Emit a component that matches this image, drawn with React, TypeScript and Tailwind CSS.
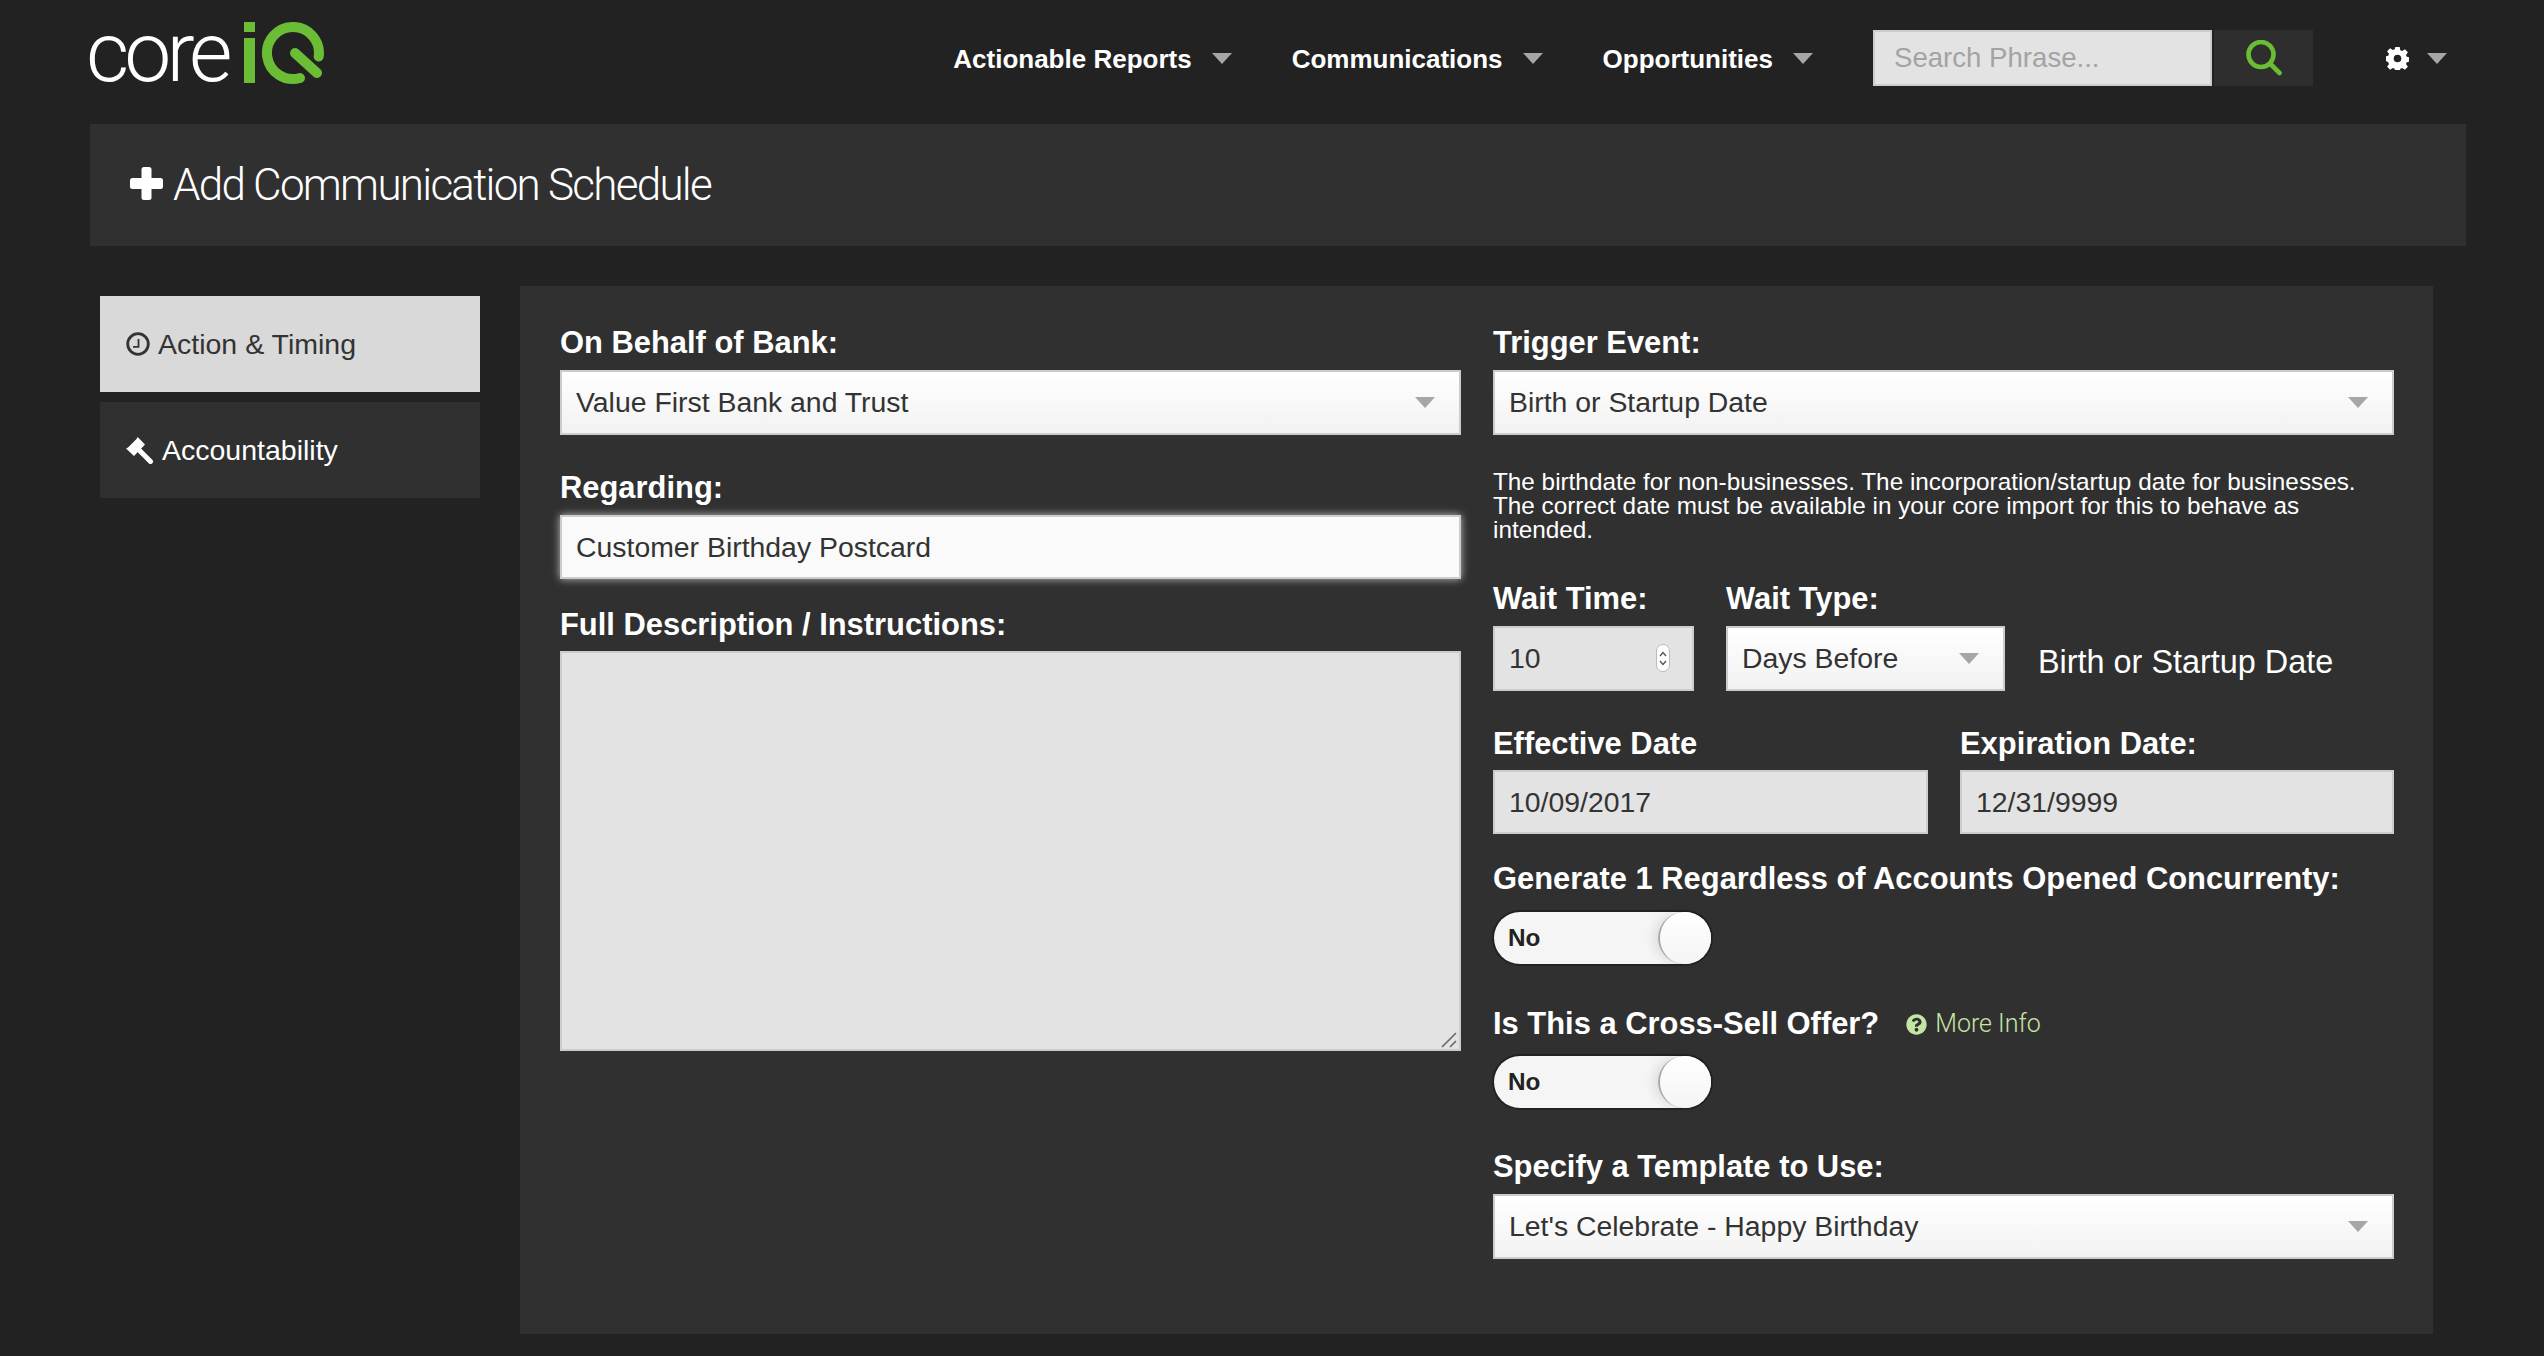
import React from 'react';
import { FaQuestionCircle } from 'react-icons/fa';

const Caret = ({ className = '' }: { className?: string }) => (
  <svg width="20" height="11" viewBox="0 0 20 11" className={className}>
    <polygon points="0,0 20,0 10,11" fill="#a6a6a6" />
  </svg>
);

const Label = ({ children, className = '' }: { children: React.ReactNode; className?: string }) => (
  <div className={`text-[30.9px] leading-[32px] font-bold text-white translate-y-[1px] ${className}`}>{children}</div>
);

const SelectBox = ({ value, className = '' }: { value: string; className?: string }) => (
  <div className={`h-[65px] flex items-center justify-between pl-[14px] pr-[24px] border-2 border-[#cccccc] bg-gradient-to-b from-white to-[#f2f2f2] text-[28.4px] text-[#333333] ${className}`}>
    <span>{value}</span>
    <Caret />
  </div>
);

const GrayInput = ({ value, className = '' }: { value: string; className?: string }) => (
  <div className={`h-[64px] flex items-center pl-[14px] border-2 border-[#cccccc] bg-[#e3e3e3] text-[28.4px] text-[#333333] ${className}`}>{value}</div>
);

const Toggle = () => (
  <div className="relative ml-[1px] w-[217px] h-[52px] rounded-full bg-[#f5f5f5] shadow-[0_0_0_2px_#222222] flex items-center pl-[14px] text-[24.3px] font-bold text-[#222222]">
    No
    <div className="absolute right-0 top-0 w-[53px] h-[52px] rounded-full border-l-2 border-[#aaaaaa] bg-gradient-to-b from-white to-[#f4f4f4] shadow-[-6px_0_10px_rgba(0,0,0,0.08)]" />
  </div>
);

const Logo = () => (
  <div className="flex items-start">
    <span className="block w-[158px] mt-[11px] text-[84px] leading-[84px] tracking-[-5px] font-light text-white font-['Roboto','Liberation_Sans',sans-serif]">core</span>
    <svg width="82" height="64" viewBox="0 0 82 64" className="mt-[22px]">
      <rect x="0" y="0" width="11" height="10" fill="#6abd34" />
      <rect x="0" y="16" width="11" height="45" fill="#6abd34" />
      <path d="M74.7 34.6 A26 26 0 1 0 56 56" fill="none" stroke="#6abd34" strokeWidth="10" strokeLinecap="round" />
      <path d="M51 31 L73 51" fill="none" stroke="#6abd34" strokeWidth="10" strokeLinecap="round" />
    </svg>
  </div>
);

const SearchIcon = () => (
  <svg width="36" height="36" viewBox="0 0 36 36" fill="none" stroke="#6abd34" strokeLinecap="round">
    <circle cx="15" cy="14.5" r="12.5" strokeWidth="4.6" />
    <path d="M24.5 24 L33.5 33" strokeWidth="4.6" />
  </svg>
);

const GearIcon = ({ className = '' }: { className?: string }) => (
  <svg width="23" height="23" viewBox="0 0 23 23" className={className} fill="#ffffff">
    <path
      fillRule="evenodd"
      d="M9.3 0h4.4l.6 3.2 1.9.8 2.7-1.8 3 3-1.9 2.7.8 1.9 3.1.6v4.2l-3.1.6-.8 1.9 1.9 2.7-3 3-2.7-1.9-1.9.8-.6 3.2H9.3l-.6-3.2-1.9-.8-2.7 1.9-3-3 1.9-2.7-.8-1.9L-.9 13.6V9.4l3.1-.6.8-1.9L1.1 4.2l3-3 2.7 1.8 1.9-.8zM11.5 7.7a3.8 3.8 0 1 0 0 7.6 3.8 3.8 0 0 0 0-7.6z"
    />
  </svg>
);

const PlusIcon = () => (
  <svg width="33" height="33" viewBox="0 0 33 33" fill="#ffffff" className="-mt-[3px]">
    <rect x="11.5" y="0" width="10" height="33" rx="2.5" />
    <rect x="0" y="11" width="33" height="11" rx="2.5" />
  </svg>
);

const ClockIcon = () => (
  <svg width="24" height="24" viewBox="0 0 24 24" fill="none" stroke="#333333">
    <circle cx="12" cy="12" r="10.3" strokeWidth="2.8" />
    <path d="M12.5 7 V14.8 H7" strokeWidth="1.8" />
  </svg>
);

const GavelIcon = () => (
  <svg width="28" height="27" viewBox="0 0 28 27" fill="#ffffff">
    <polygon points="11.7,0 19,7.5 8,19 0,11.5 2,10.5 10.5,2" />
    <path d="M13 13 L24.5 24.5" stroke="#ffffff" strokeWidth="5" strokeLinecap="round" />
  </svg>
);

const NavItem = ({ text }: { text: string }) => (
  <div className="flex items-center gap-[20px] mr-[60px]">
    <span className="text-[26px] leading-[32px] font-bold text-white translate-y-[1px]">{text}</span>
    <Caret />
  </div>
);

export default function App() {
  return (
    <div className="min-h-screen bg-[#222222] font-['Liberation_Sans',Arial,sans-serif]">
      <header className="h-[124px] flex justify-between pl-[86px] pr-[97px]">
        <Logo />
        <div className="flex items-center h-[56px] mt-[30px]">
          <NavItem text="Actionable Reports" />
          <NavItem text="Communications" />
          <NavItem text="Opportunities" />
          <div className="w-[339px] h-[56px] flex items-center pl-[19px] border-2 border-[#cccccc] bg-[#e3e3e3] text-[27.6px] text-[#a3a3a3]">Search Phrase...</div>
          <div className="ml-[2px] w-[99px] h-[56px] flex items-center justify-center bg-[#2e2e2e]">
            <SearchIcon />
          </div>
          <GearIcon className="ml-[73px]" />
          <Caret className="ml-[18px]" />
        </div>
      </header>

      <div className="ml-[90px] mr-[78px] h-[122px] bg-[#303030] flex items-center pl-[40px]">
        <PlusIcon />
        <h1 className="ml-[10px] text-[44px] tracking-[-1.75px] font-light text-white font-['Roboto','Liberation_Sans',sans-serif]">Add Communication Schedule</h1>
      </div>

      <div className="flex pl-[100px] pr-[111px] pt-[40px] pb-[22px]">
        <aside className="w-[380px] shrink-0 mt-[10px] mr-[40px]">
          <div className="h-[96px] bg-[#d9d9d9] flex items-center pl-[26px] text-[28.5px] text-[#333333]">
            <ClockIcon />
            <span className="ml-[8px]">Action &amp; Timing</span>
          </div>
          <div className="mt-[10px] h-[96px] bg-[#303030] flex items-center pl-[26px] text-[28.5px] text-white">
            <GavelIcon />
            <span className="ml-[8px]">Accountability</span>
          </div>
        </aside>

        <main className="flex-1 bg-[#303030] pl-[40px] pr-[39px] pt-[40px] pb-[75px] grid grid-cols-2 gap-x-[32px] items-start">
          <div>
            <Label className="mb-[12px]">On Behalf of Bank:</Label>
            <SelectBox value="Value First Bank and Trust" />
            <Label className="mt-[36px] mb-[12px]">Regarding:</Label>
            <div className="h-[64px] flex items-center pl-[14px] border-2 border-[#cccccc] bg-[#fafafa] shadow-[0_0_8px_rgba(255,255,255,0.7)] text-[28.4px] text-[#333333]">Customer Birthday Postcard</div>
            <Label className="mt-[29px] mb-[11px]">Full Description / Instructions:</Label>
            <div className="relative">
              <textarea className="block w-full h-[400px] border-2 border-[#cccccc] bg-[#e3e3e3] resize-none outline-none" />
              <svg width="16" height="16" viewBox="0 0 16 16" className="absolute right-[4px] bottom-[3px]" stroke="#666666" strokeWidth="1.6" fill="none">
                <path d="M1 15 L15 1" />
                <path d="M9 15 L15 9" />
              </svg>
            </div>
          </div>

          <div>
            <Label className="mb-[12px]">Trigger Event:</Label>
            <SelectBox value="Birth or Startup Date" />
            <p className="mt-[35px] text-[24.3px] leading-[24px] text-white">
              The birthdate for non-businesses. The incorporation/startup date for businesses.
              <br />
              The correct date must be available in your core import for this to behave as
              <br />
              intended.
            </p>

            <div className="mt-[40px] flex">
              <div className="w-[201px] mr-[32px]">
                <Label className="mb-[12px]">Wait Time:</Label>
                <div className="relative">
                  <GrayInput value="10" className="h-[65px]" />
                  <div className="absolute left-[163px] top-[18px] w-[14px] h-[28px] rounded-full bg-white border border-[#bbbbbb] flex flex-col items-center justify-center gap-[3px]">
                    <svg width="8" height="6" viewBox="0 0 8 6" fill="none" stroke="#555555" strokeWidth="1.4"><path d="M1 5 L4 1.5 L7 5" /></svg>
                    <svg width="8" height="6" viewBox="0 0 8 6" fill="none" stroke="#555555" strokeWidth="1.4"><path d="M1 1 L4 4.5 L7 1" /></svg>
                  </div>
                </div>
              </div>
              <div className="w-[279px] mr-[33px]">
                <Label className="mb-[12px]">Wait Type:</Label>
                <SelectBox value="Days Before" />
              </div>
              <div className="mt-[60px] text-[32.4px] leading-[40px] text-white whitespace-nowrap">Birth or Startup Date</div>
            </div>

            <div className="mt-[36px] flex gap-x-[32px]">
              <div className="w-[435px]">
                <Label className="mb-[11px]">Effective Date</Label>
                <GrayInput value="10/09/2017" />
              </div>
              <div className="flex-1">
                <Label className="mb-[11px]">Expiration Date:</Label>
                <GrayInput value="12/31/9999" />
              </div>
            </div>

            <Label className="mt-[28px] mb-[18px]">Generate 1 Regardless of Accounts Opened Concurrenty:</Label>
            <Toggle />

            <div className="mt-[42px] mb-[16px] flex items-center">
              <Label>Is This a Cross-Sell Offer?</Label>
              <FaQuestionCircle size={21} color="#c5e5a5" className="ml-[27px] mt-[2px]" />
              <span className="ml-[8px] mt-[2px] text-[25px] leading-[32px] font-light text-[#c5e5a5] font-['Roboto','Liberation_Sans',sans-serif]">More Info</span>
            </div>
            <Toggle />

            <Label className="mt-[42px] mb-[12px]">Specify a Template to Use:</Label>
            <SelectBox value="Let's Celebrate - Happy Birthday" />
          </div>
        </main>
      </div>
    </div>
  );
}
